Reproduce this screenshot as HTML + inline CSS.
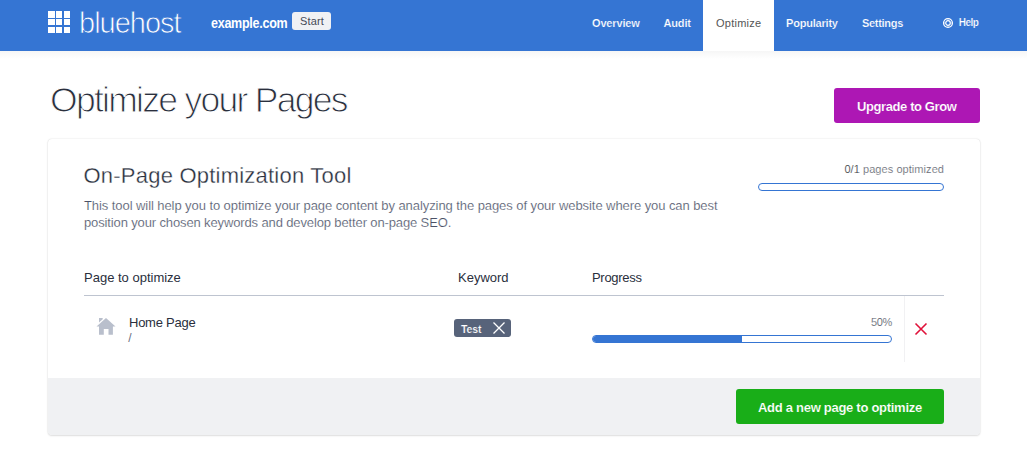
<!DOCTYPE html>
<html><head><meta charset="utf-8">
<style>
*{box-sizing:border-box;margin:0;padding:0}
html,body{width:1027px;height:473px;overflow:hidden;background:#fff;font-family:"Liberation Sans",sans-serif;color:#333}
.a{position:absolute;white-space:nowrap;line-height:1}
.hdr{position:absolute;left:0;top:0;width:1027px;height:51px;background:#3575d3}
.hshadow{position:absolute;left:0;top:51px;width:1027px;height:8px;background:linear-gradient(#f6f6f6,#fff)}
.grid{position:absolute;left:48px;top:11px;width:23px;height:23px}
.grid i{position:absolute;width:6.5px;height:6.5px;background:#fff}
#logo{left:79px;top:9px;font-size:29px;letter-spacing:-1px;color:#fff;-webkit-text-stroke:0.75px #3575d3}
#site{left:211px;top:15.8px;font-size:14px;letter-spacing:-0.3px;transform:scaleX(0.895);transform-origin:0 0;color:#fff;font-weight:bold}
.badge{position:absolute;left:292px;top:12px;width:39px;height:18px;background:#f0f1f4;border-radius:3px}
#start{left:300px;top:15.6px;font-size:11px;letter-spacing:0.15px;color:#454a57}
.nav{font-size:11px;font-weight:bold;color:#fff;top:18px;-webkit-text-stroke:0.2px #3575d3}
.tab{position:absolute;left:703px;top:0;width:71px;height:51px;background:#fff}
#opt{left:716px;top:18px;font-size:11px;letter-spacing:0.25px;color:#555}
#h1{left:50px;top:83px;font-size:35.5px;letter-spacing:-1.72px;color:#2a2f3d;-webkit-text-stroke:1px #fff}
.upg{position:absolute;left:834px;top:88px;width:146px;height:35px;background:#ad17b4;border-radius:3px}
#upgt{left:857px;top:99.5px;font-size:13px;letter-spacing:-0.4px;font-weight:bold;color:#fff;-webkit-text-stroke:0.15px #ad17b4}
.card{position:absolute;left:48px;top:139px;width:932px;height:296px;border:0;border-radius:4px;box-shadow:0 0 1.5px rgba(0,0,0,.18),0 1px 2px rgba(0,0,0,.1);overflow:hidden;background:#fff}
.foot{position:absolute;left:0;top:239px;width:932px;height:60px;background:#f0f1f3}
#t2{left:83.5px;top:165px;font-size:22px;letter-spacing:0.22px;color:#2a2f3d;-webkit-text-stroke:0.3px #fff}
#d1{left:84px;top:199px;font-size:13px;letter-spacing:-0.074px;color:#4a5166;-webkit-text-stroke:0.2px #fff}
#d2{left:84px;top:215.7px;font-size:13px;letter-spacing:-0.13px;color:#4a5166;-webkit-text-stroke:0.2px #fff}
#po{right:83px;top:164px;font-size:11px;letter-spacing:0.06px;color:#666a73;-webkit-text-stroke:0.15px #fff}
#po b{font-weight:normal;color:#3a3d45}
.bar1{position:absolute;left:758px;top:183px;width:186px;height:8px;border:1.2px solid #3575d3;border-radius:5px}
.th{top:271px;font-size:13px;color:#2a2f3d}
.hl{position:absolute;left:84px;top:295px;width:860px;height:1px;background:#bec4d0}
#hp{left:129px;top:316px;font-size:13px;letter-spacing:-0.25px;color:#2a2f3d}
#sl{left:128.3px;top:332.3px;font-size:12px;color:#6b6f80}
.tag{position:absolute;left:454px;top:319px;width:57px;height:18px;background:#57637a;border-radius:3px}
#test{left:461px;top:324px;font-size:10.5px;letter-spacing:-0.1px;font-weight:bold;color:#fff;-webkit-text-stroke:0.2px #57637a}
#pct{right:135px;top:317px;letter-spacing:-0.3px;font-size:11px;color:#555a66;-webkit-text-stroke:0.15px #fff}
.bar2{position:absolute;left:592px;top:335px;width:300px;height:8px;border:1.2px solid #3575d3;border-radius:5px;overflow:hidden}
.bar2 i{position:absolute;left:0;top:0;width:149px;height:100%;background:#3575d3}
.vl{position:absolute;left:904px;top:296px;width:1px;height:66px;background:#f1f1f3}
.gbtn{position:absolute;left:736px;top:389px;width:208px;height:35px;background:#19ae18;border-radius:3px}
#gbt{left:758px;top:400.5px;font-size:13px;letter-spacing:-0.28px;font-weight:bold;color:#fff;-webkit-text-stroke:0.15px #19ae18}
</style></head><body>
<div class="hdr">
  <div class="grid">
    <i style="left:0;top:0"></i><i style="left:7.9px;top:0"></i><i style="left:15.8px;top:0"></i>
    <i style="left:0;top:7.9px"></i><i style="left:7.9px;top:7.9px"></i><i style="left:15.8px;top:7.9px"></i>
    <i style="left:0;top:15.8px"></i><i style="left:7.9px;top:15.8px"></i><i style="left:15.8px;top:15.8px"></i>
  </div>
  <div class="a" id="logo">bluehost</div>
  <div class="a" id="site">example.com</div>
  <div class="badge"></div>
  <div class="a" id="start">Start</div>
  <div class="a nav" id="n1" style="left:592px;letter-spacing:-0.15px">Overview</div>
  <div class="a nav" id="n2" style="left:663.5px;letter-spacing:-0.15px">Audit</div>
  <div class="tab"></div>
  <div class="a" id="opt">Optimize</div>
  <div class="a nav" id="n3" style="left:786px;letter-spacing:-0.2px">Popularity</div>
  <div class="a nav" id="n4" style="left:862px;letter-spacing:-0.3px">Settings</div>
  <svg style="position:absolute;left:941.8px;top:16.8px" width="12" height="12" viewBox="0 0 12 12">
    <circle cx="6" cy="6" r="4.4" fill="none" stroke="#fff" stroke-width="1.3"/>
    <circle cx="6" cy="6" r="2.3" fill="none" stroke="#fff" stroke-width="1.2"/>
    <path d="M6 2.4V1.6M6 9.6V10.4M2.4 6H1.6M9.6 6H10.4" stroke="#fff" stroke-width="0.9"/>
  </svg>
  <div class="a nav" id="help" style="left:958.7px;top:18.3px;font-size:10px;letter-spacing:-0.5px">Help</div>
</div>
<div class="hshadow"></div>
<div class="a" id="h1">Optimize your Pages</div>
<div class="upg"></div>
<div class="a" id="upgt">Upgrade to Grow</div>
<div class="card">
  <div class="foot"></div>
</div>
<div class="a" id="t2">On-Page Optimization Tool</div>
<div class="a" id="d1">This tool will help you to optimize your page content by analyzing the pages of your website where you can best</div>
<div class="a" id="d2">position your chosen keywords and develop better on-page SEO.</div>
<div class="a" id="po"><b>0/1</b> pages optimized</div>
<div class="bar1"></div>
<div class="a th" id="th1" style="left:84px">Page to optimize</div>
<div class="a th" id="th2" style="left:458px">Keyword</div>
<div class="a th" id="th3" style="left:592px;letter-spacing:-0.3px">Progress</div>
<div class="hl"></div>
<svg style="position:absolute;left:96px;top:317px" width="20" height="19" viewBox="0 0 20 19">
  <path d="M3 1h3.7v1.2L3 5.4z" fill="#b9bfcc"/>
  <path d="M0.5 9.4L10 1.1l9.5 8.3z" fill="#b9bfcc"/>
  <path d="M3 8.5h13.9v9.2h-4.4v-5.7h-4.7v5.7h-4.8z" fill="#b9bfcc"/>
</svg>
<div class="a" id="hp">Home Page</div>
<div class="a" id="sl">/</div>
<div class="tag"></div>
<div class="a" id="test">Test</div>
<svg style="position:absolute;left:492px;top:321px" width="14" height="14" viewBox="0 0 14 14">
  <path d="M1.5 1.5L12.5 12.5M12.5 1.5L1.5 12.5" stroke="#fff" stroke-width="1.3"/>
</svg>
<div class="a" id="pct">50%</div>
<div class="bar2"><i></i></div>
<div class="vl"></div>
<svg style="position:absolute;left:914px;top:322px" width="14" height="14" viewBox="0 0 14 14">
  <path d="M1.5 1.5L12.5 12.5M12.5 1.5L1.5 12.5" stroke="#e0123a" stroke-width="1.6"/>
</svg>
<div class="gbtn"></div>
<div class="a" id="gbt">Add a new page to optimize</div>
</body></html>
